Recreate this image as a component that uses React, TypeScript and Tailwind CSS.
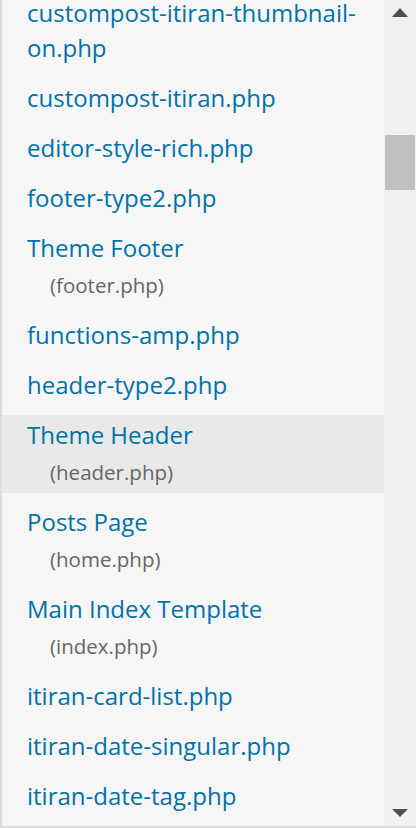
import React from 'react';

type FileItem = {
  label: string;
  file?: string;
  active?: boolean;
};

const FILES: FileItem[] = [
  { label: 'custompost-itiran-thumbnail-on.php' },
  { label: 'custompost-itiran.php' },
  { label: 'editor-style-rich.php' },
  { label: 'footer-type2.php' },
  { label: 'Theme Footer', file: '(footer.php)' },
  { label: 'functions-amp.php' },
  { label: 'header-type2.php' },
  { label: 'Theme Header', file: '(header.php)', active: true },
  { label: 'Posts Page', file: '(home.php)' },
  { label: 'Main Index Template', file: '(index.php)' },
  { label: 'itiran-card-list.php' },
  { label: 'itiran-date-singular.php' },
  { label: 'itiran-date-tag.php' },
  { label: 'itiran-date.php' },
];

const App: React.FC = () => {
  return (
    <div
      className="w-[416px] h-[828px] overflow-hidden flex bg-[#f6f6f6] border-l-2 border-b-2 border-[#dcdcdc]"
      style={{ fontFamily: '"Open Sans", "Noto Sans", sans-serif' }}
    >
      {/* file list */}
      <div className="flex-1 overflow-hidden">
        <ul className="flex flex-col gap-[9px] mt-[-7px]">
          {FILES.map((item) => (
            <li
              key={item.label}
              className={`pt-[2px] pl-[25px] pr-[2px] ${item.file ? 'pb-[1px]' : 'pb-[4px]'} ${item.active ? 'bg-[#e9e9e9]' : ''}`}
            >
              <a className="block text-[#0073aa] text-[24px] leading-[35px] break-words cursor-pointer">
                {item.label === 'custompost-itiran-thumbnail-on.php' ? (
                  <>
                    custompost-itiran-thumbnail-
                    <br />
                    on.php
                  </>
                ) : (
                  item.label
                )}
              </a>
              {item.file && (
                <span className="block pl-[23px] text-[#666] text-[20.5px] leading-[40px]">{item.file}</span>
              )}
            </li>
          ))}
        </ul>
      </div>

      {/* scrollbar */}
      <div className="w-[32px] shrink-0 bg-[#f1f1f1] flex flex-col items-center">
        <svg width="16" height="9" viewBox="0 0 16 9" className="mt-[8px]">
          <polygon points="8,0 16,9 0,9" fill="#505050" />
        </svg>
        <div className="mt-[118px] w-[30px] h-[55px] bg-[#c1c1c1]" />
        <div className="flex-1" />
        <svg width="16" height="8" viewBox="0 0 16 8" className="mb-[9px]">
          <polygon points="0,0 16,0 8,8" fill="#505050" />
        </svg>
      </div>
    </div>
  );
};

export default App;
